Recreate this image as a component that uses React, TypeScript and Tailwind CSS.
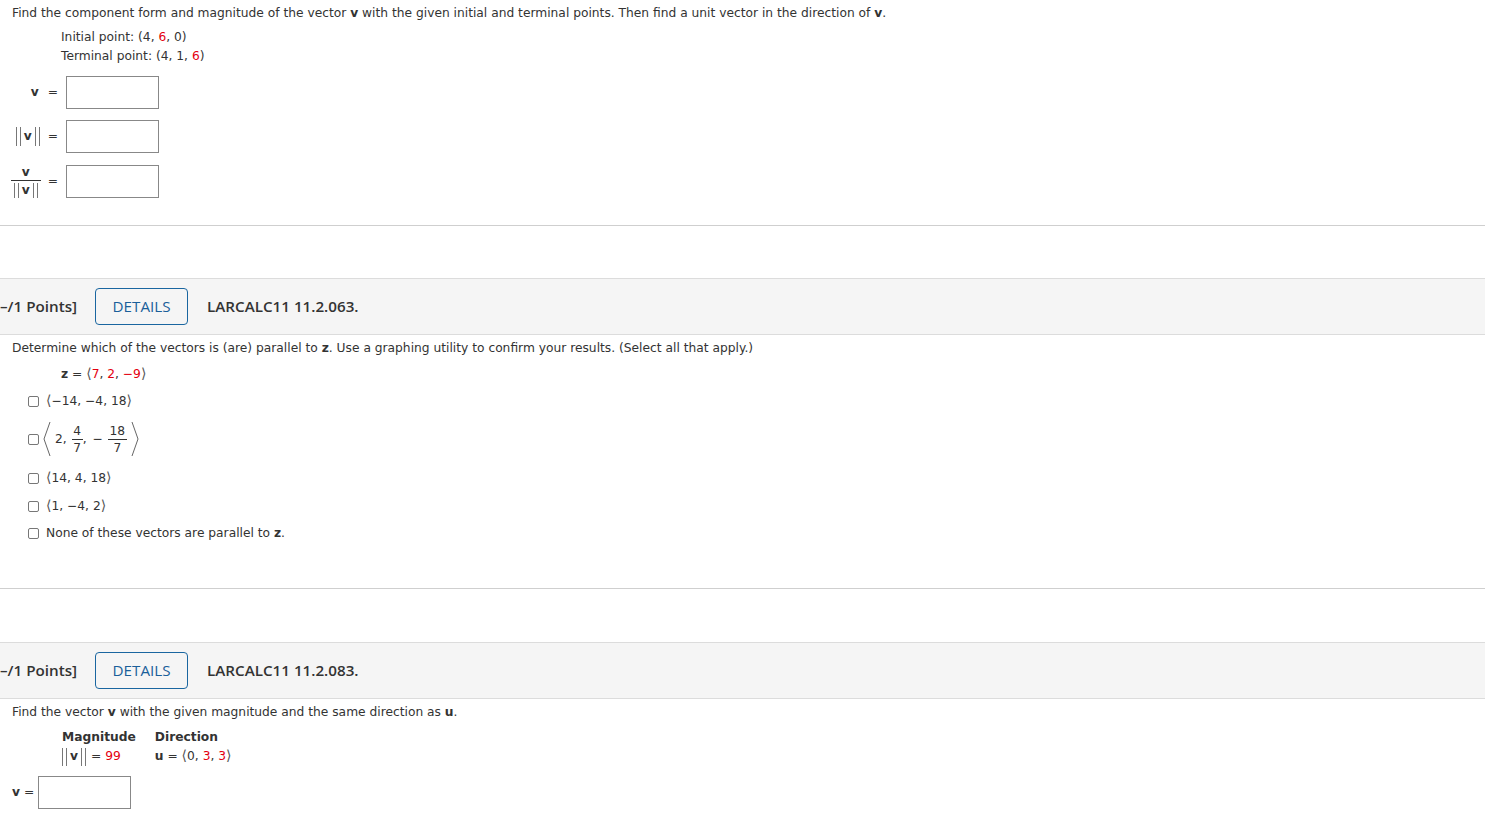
import React from "react";

const R = ({ children }: { children: React.ReactNode }) => (
  <span className="text-[#e4000f]">{children}</span>
);

const Norm = ({ h = "h-[19px]", lh = "leading-[19px]" }: { h?: string; lh?: string }) => (
  <span className="inline-flex items-center gap-[3px] align-middle">
    <span className={`inline-block ${h} w-[5px] border-x border-[#777]`} />
    <b className={`${lh} text-[#333]`}>v</b>
    <span className={`inline-block ${h} w-[5px] border-x border-[#777]`} />
  </span>
);

const Box = () => <div className="h-[33px] w-[93px] border border-[#888] bg-white" />;

const LA = () => <span className="text-[14px] leading-none text-[#555]">⟨</span>;
const RA = () => <span className="text-[14px] leading-none text-[#555]">⟩</span>;

const Check = () => (
  <span className="inline-block h-[11px] w-[11px] shrink-0 rounded-[2px] border border-[#777] bg-white" />
);

const Header = ({ id }: { id: string }) => (
  <div className="flex h-[57px] items-center border-y border-[#dcdcdc] bg-[#f5f5f5] font-['Open_Sans'] text-[15.2px]">
    <span className="font-semibold text-[#333]">–/1 Points]</span>
    <div className="ml-[18px] flex h-[37px] w-[93px] items-center justify-center rounded-[4px] border border-[#1a66a0] text-[#1a5f9a]">
      DETAILS
    </div>
    <span className="ml-[19px] font-semibold text-[#333]">{id}</span>
  </div>
);

export default function App() {
  return (
    <div className="min-h-[835px] w-[1485px] bg-white font-['DejaVu_Sans',sans-serif] text-[12.25px] leading-[19px] text-[#333]">
      <div className="px-3 pt-[4px]">
        <p>
          Find the component form and magnitude of the vector <b>v</b> with the given initial and terminal points.
          Then find a unit vector in the direction of <b>v</b>.
        </p>
        <div className="mt-[5px] pl-[49px]">
          <div>
            Initial point: (4, <R>6</R>, 0)
          </div>
          <div>
            Terminal point: (4, 1, <R>6</R>)
          </div>
        </div>
        <div className="mt-[10px] flex flex-col">
          <div className="flex items-center">
            <div className="flex w-[46px] justify-end gap-[9px]">
              <b>v</b>
              <span>=</span>
            </div>
            <div className="ml-[8px]">
              <Box />
            </div>
          </div>
          <div className="mt-[11px] flex items-center">
            <div className="flex w-[46px] items-center justify-end gap-[8px]">
              <Norm />
              <span>=</span>
            </div>
            <div className="ml-[8px]">
              <Box />
            </div>
          </div>
          <div className="mt-[12px] flex items-center">
            <div className="flex w-[46px] items-center justify-end gap-[7px]">
              <div className="flex flex-col items-center">
                <b className="leading-[15px]">v</b>
                <span className="mb-[2px] block h-px w-[30px] shrink-0 bg-[#333]" />
                <Norm h="h-[15px]" lh="leading-[15px]" />
              </div>
              <span>=</span>
            </div>
            <div className="ml-[8px]">
              <Box />
            </div>
          </div>
        </div>
      </div>

      <div className="mt-[27px] border-t border-[#cfcfcf]" />
      <div className="mt-[52px]">
        <Header id="LARCALC11 11.2.063." />
      </div>
      <div className="px-3 pt-[4px]">
        <p>
          Determine which of the vectors is (are) parallel to <b>z</b>. Use a graphing utility to confirm your
          results. (Select all that apply.)
        </p>
        <div className="mt-[7px] pl-[49px]">
          <b>z</b> = <LA />
          <R>7</R>, <R>2</R>, <R>−9</R>
          <RA />
        </div>
        <div className="mt-[8px] flex flex-col pl-[16px]">
          <label className="flex h-[19px] items-center gap-[7px]">
            <Check />
            <span>
              <LA />
              −14, −4, 18
              <RA />
            </span>
          </label>
          <label className="mt-[9px] flex h-[38px] items-center gap-[3px]">
            <Check />
            <svg width="10" height="36" viewBox="0 0 10 36" className="shrink-0">
              <path d="M8 1 L2 18 L8 35" fill="none" stroke="#666" strokeWidth="1" />
            </svg>
            <span className="flex items-center">
              <span>2,</span>
              <span className="ml-[5px] inline-flex flex-col items-center leading-[16px]">
                <span>4</span>
                <span className="block h-px w-[11px] bg-[#333]" />
                <span>7</span>
              </span>
              <span className="self-center">,</span>
              <span className="ml-[6px]">−</span>
              <span className="ml-[5px] inline-flex flex-col items-center leading-[16px]">
                <span>18</span>
                <span className="block h-px w-[19px] bg-[#333]" />
                <span>7</span>
              </span>
            </span>
            <svg width="10" height="36" viewBox="0 0 10 36" className="shrink-0">
              <path d="M2 1 L8 18 L2 35" fill="none" stroke="#666" strokeWidth="1" />
            </svg>
          </label>
          <label className="mt-[11px] flex h-[19px] items-center gap-[7px]">
            <Check />
            <span>
              <LA />
              14, 4, 18
              <RA />
            </span>
          </label>
          <label className="mt-[9px] flex h-[19px] items-center gap-[7px]">
            <Check />
            <span>
              <LA />
              1, −4, 2
              <RA />
            </span>
          </label>
          <label className="mt-[8px] flex h-[19px] items-center gap-[7px]">
            <Check />
            <span>
              None of these vectors are parallel to <b>z</b>.
            </span>
          </label>
        </div>
      </div>

      <div className="mt-[45px] border-t border-[#cfcfcf]" />
      <div className="mt-[53px]">
        <Header id="LARCALC11 11.2.083." />
      </div>
      <div className="px-3 pt-[4px]">
        <p>
          Find the vector <b>v</b> with the given magnitude and the same direction as <b>u</b>.
        </p>
        <div className="mt-[6px] flex pl-[50px]">
          <div className="flex flex-col">
            <b>Magnitude</b>
            <div className="flex h-[19px] items-center gap-[5px]">
              <Norm h="h-[18px]" />
              <span>
                = <R>99</R>
              </span>
            </div>
          </div>
          <div className="ml-[19px] flex flex-col">
            <b>Direction</b>
            <div className="h-[19px]">
              <b>u</b> = <LA />0, <R>3</R>, <R>3</R>
              <RA />
            </div>
          </div>
        </div>
        <div className="mt-[10px] flex items-center">
          <b>v</b>
          <span className="ml-[4px]">=</span>
          <div className="ml-[4px]">
            <Box />
          </div>
        </div>
      </div>
    </div>
  );
}
